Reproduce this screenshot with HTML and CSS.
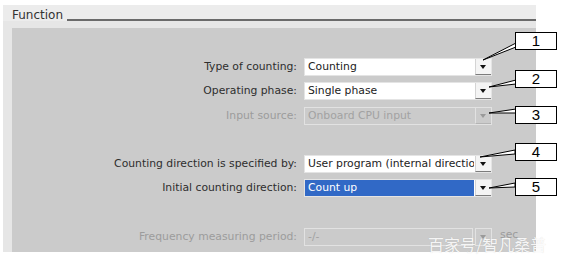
FILE: index.html
```html
<!DOCTYPE html>
<html lang="en">
<head>
    <meta charset="UTF-8">
    <meta name="viewport" content="width=device-width, initial-scale=1.0">
    <title>Function</title>
    <link rel="stylesheet" href="styles.css">
</head>
<body>

    <div class="page">
        <div class="section">
            <div class="section-head">
                <span class="title">Function</span>
                <span class="rule"></span>
            </div>

            <!-- Parameter rows -->
            <div class="panel">
                <label>Type of counting:</label>
                <div class="select"><span class="value">Counting</span><span class="arrow"></span></div>
                <span></span>

                <label>Operating phase:</label>
                <div class="select"><span class="value">Single phase</span><span class="arrow"></span></div>
                <span></span>

                <label class="off">Input source:</label>
                <div class="select disabled"><span class="value">Onboard CPU input</span><span class="arrow"></span></div>
                <span></span>

                <span class="empty"></span><span></span><span></span>

                <label>Counting direction is specified by:</label>
                <div class="select"><span class="value">User program (internal direction control)</span><span class="arrow"></span></div>
                <span></span>

                <label>Initial counting direction:</label>
                <div class="select selected"><span class="value">Count up</span><span class="arrow"></span></div>
                <span></span>

                <span class="empty"></span><span></span><span></span>

                <label class="off">Frequency measuring period:</label>
                <div class="select disabled split"><span class="value">-/-</span><span class="arrow"></span></div>
                <span class="unit">sec</span>
            </div>
        </div>

        <!-- Callout leaders -->
        <svg class="leaders" width="569" height="263" viewBox="0 0 569 263">
            <polygon points="516,43 516,47 483,60" />
            <polygon points="516,80 516,84 489,87" />
            <polygon points="516,109 516,113 489,113" />
            <polygon points="515,150 515,154 480,157" />
            <polygon points="515,183 515,187 489,188" />
        </svg>

        <div class="callout c1">1</div>
        <div class="callout c2">2</div>
        <div class="callout c3">3</div>
        <div class="callout c4">4</div>
        <div class="callout c5">5</div>

        <div class="watermark">百家号/智凡桑普</div>
    </div>

</body>
</html>
```

FILE: styles.css
```css
/* Base */
body {
    margin: 0;
    background: #ffffff;
    font-family: "DejaVu Sans", sans-serif;
}

.page {
    position: relative;
    width: 569px;
    height: 263px;
    overflow: hidden;
}

/* Section frame */
.section {
    margin: 5px 0 0 3px;
    width: 533px;
    height: 247px;
    background: #e6e6e6;
}

.section-head {
    display: flex;
    height: 23px;
    padding-left: 9px;
    background: linear-gradient(#ececec 0, #ececec 16px, #e6e6e6 16px);
}

.title {
    margin-top: 3px;
    font-size: 12px;
    line-height: 15px;
    color: #333;
}

.rule {
    flex: 1;
    align-self: flex-start;
    margin: 14px 0 0 4px;
    border-top: 2px solid #6a6a6a;
}

/* Panel with the parameters */
.panel {
    display: grid;
    grid-template-columns: 285px 188px auto;
    grid-auto-rows: 18px;
    column-gap: 7px;
    row-gap: 6.3px;
    margin-left: 9px;
    height: 224px;
    padding-top: 30px;
    box-sizing: border-box;
    background: #cbcbcb;
    overflow: hidden;
}

.panel label {
    text-align: right;
    font-size: 10.8px;
    line-height: 18px;
    color: #2e2e2e;
    white-space: nowrap;
}

.panel label.off {
    color: #9c9c9c;
}

/* Dropdown */
.select {
    display: flex;
    height: 18px;
    box-sizing: border-box;
    background: #ffffff;
    border: 1px solid #e4e4e4;
}

.value {
    flex: 1;
    padding-left: 3px;
    font-size: 10.8px;
    line-height: 16px;
    color: #222;
    white-space: nowrap;
    overflow: hidden;
}

.arrow {
    position: relative;
    width: 15px;
    margin-left: 1px;
    background: #f4f4f4;
    border-left: 1px solid #d4d4d4;
    border-bottom: 1px solid #7c7c7c;
}

.arrow::after {
    content: "";
    position: absolute;
    left: 4px;
    top: 6px;
    border-left: 3.5px solid transparent;
    border-right: 3.5px solid transparent;
    border-top: 4px solid #111;
}

.select.selected .value {
    background: #3169c6;
    color: #ffffff;
}

.select.disabled {
    background: transparent;
    border-color: #e2e2e2;
}

.select.disabled .value {
    color: #a2a2a2;
}

.select.disabled .arrow {
    background: transparent;
    border-left-color: #e2e2e2;
    border-bottom-color: #b4b4b4;
}

.select.disabled .arrow::after {
    border-top-color: #9a9a9a;
}

.select.split {
    border: none;
}

.select.split .value {
    border: 1px solid #e2e2e2;
}

.select.split .arrow {
    margin-left: 2px;
    border: 1px solid #e2e2e2;
}

.unit {
    padding-left: 1px;
    font-size: 10.8px;
    line-height: 14px;
    color: #9c9c9c;
}

/* Callouts */
.leaders {
    position: absolute;
    left: 0;
    top: 0;
}

.leaders polygon {
    fill: #ffffff;
    stroke: #000000;
    stroke-width: 1;
}

.callout {
    position: absolute;
    left: 515px;
    width: 42px;
    height: 18px;
    box-sizing: border-box;
    border: 1px solid #000;
    background: #ffffff;
    font-family: "Liberation Sans", Arial, sans-serif;
    font-size: 15px;
    line-height: 16px;
    text-align: center;
    color: #000;
}

.c1 { top: 32px; }
.c2 { top: 70px; }
.c3 { top: 106px; }
.c4 { top: 143px; }
.c5 { top: 178px; }

.watermark {
    position: absolute;
    left: 428px;
    top: 234px;
    font-family: "Noto Sans CJK SC", sans-serif;
    font-size: 16px;
    line-height: 20px;
    color: rgba(255, 255, 255, 0.9);
    text-shadow: 0 0 1px rgba(0, 0, 0, 0.15);
    white-space: nowrap;
}
```
